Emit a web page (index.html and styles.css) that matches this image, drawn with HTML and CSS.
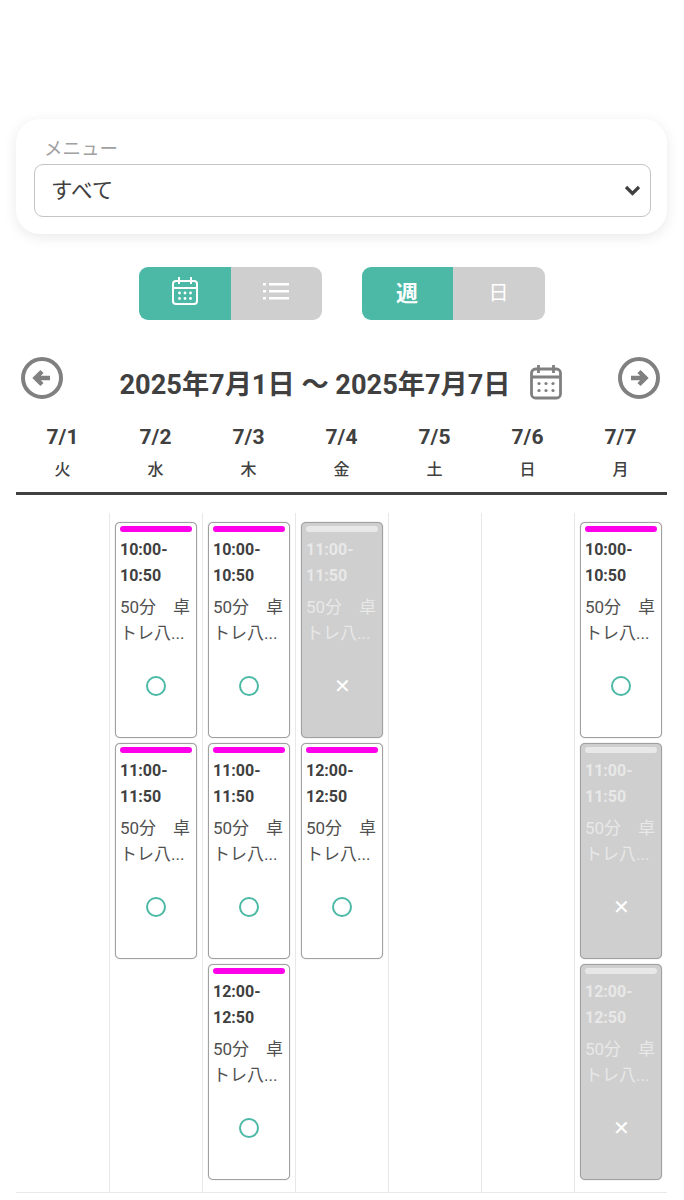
FILE: index.html
```html
<!DOCTYPE html>
<html lang="ja">
<head>
    <meta charset="utf-8" />
    <title>予約カレンダー</title>
    <meta name="viewport" content="width=device-width, initial-scale=1.0">
    <link rel="stylesheet" href="styles.css">
</head>
<body>

<div class="filter-card">
    <div class="filter-label">メニュー</div>
    <div class="select-box">
        <span>すべて</span>
        <svg class="select-arrow" width="17" height="11" viewBox="0 0 17 11"><path d="M2 2l6.500 6.500L15 2" fill="none" stroke="#404040" stroke-width="3.200"/></svg>
    </div>
</div>

<div class="toggle-row">
    <div class="toggle">
        <div class="toggle-item active">
            <svg width="26" height="28" viewBox="0 0 26 28" fill="none" stroke="#fff" stroke-width="2"><rect x="1" y="4" width="24" height="23" rx="3"/><path d="M1 11h24M7 0v7M19 0v7"/><g fill="#fff" stroke="none"><circle cx="7.500" cy="16" r="1.400"/><circle cx="13" cy="16" r="1.400"/><circle cx="18.500" cy="16" r="1.400"/><circle cx="7.500" cy="21.500" r="1.400"/><circle cx="13" cy="21.500" r="1.400"/><circle cx="18.500" cy="21.500" r="1.400"/></g></svg>
        </div>
        <div class="toggle-item">
            <svg width="26" height="18" viewBox="0 0 26 18" fill="#fff"><rect x="0" y="1" width="3" height="2.500"/><rect x="6" y="1" width="20" height="2.500"/><rect x="0" y="8" width="3" height="2.500"/><rect x="6" y="8" width="20" height="2.500"/><rect x="0" y="15" width="3" height="2.500"/><rect x="6" y="15" width="20" height="2.500"/></svg>
        </div>
    </div>
    <div class="toggle">
        <div class="toggle-item active strong">週</div>
        <div class="toggle-item">日</div>
    </div>
</div>

<div class="date-nav">
    <svg class="nav-arrow" width="42" height="42" viewBox="0 0 42 42" fill="none" stroke="#808080"><circle cx="21" cy="21" r="19" stroke-width="4"/><path d="M29 21H14M21 14.500L14.500 21l6.500 6.500" stroke-width="4.500"/></svg>
    <div class="date-title">
        <span>2025年7月1日 〜 2025年7月7日</span>
        <svg width="32" height="36" viewBox="0 0 32 36" fill="none" stroke="#808080" stroke-width="2.800"><rect x="1.500" y="5" width="29" height="29" rx="4"/><path d="M1.500 13h29M8.500 1v8M23.500 1v8"/><g fill="#808080" stroke="none"><circle cx="9" cy="19.500" r="1.600"/><circle cx="16" cy="19.500" r="1.600"/><circle cx="23" cy="19.500" r="1.600"/><circle cx="9" cy="26.500" r="1.600"/><circle cx="16" cy="26.500" r="1.600"/><circle cx="23" cy="26.500" r="1.600"/></g></svg>
    </div>
    <svg class="nav-arrow" width="42" height="42" viewBox="0 0 42 42" fill="none" stroke="#808080"><circle cx="21" cy="21" r="19" stroke-width="4"/><path d="M13 21h15M21 14.500l6.500 6.500-6.500 6.500" stroke-width="4.500"/></svg>
</div>

<div class="week-head">
    <div class="day-head"><b>7/1</b><span>火</span></div>
    <div class="day-head"><b>7/2</b><span>水</span></div>
    <div class="day-head"><b>7/3</b><span>木</span></div>
    <div class="day-head"><b>7/4</b><span>金</span></div>
    <div class="day-head"><b>7/5</b><span>土</span></div>
    <div class="day-head"><b>7/6</b><span>日</span></div>
    <div class="day-head"><b>7/7</b><span>月</span></div>
</div>

<div class="week-body">
    <div class="day-col"></div>

    <div class="day-col">
        <div class="slot">
            <div class="slot-bar"></div>
            <div class="slot-time">10:00-<br>10:50</div>
            <div class="slot-name">50分　卓トレ八...</div>
            <div class="slot-mark"><i class="circle"></i></div>
        </div>
        <div class="slot">
            <div class="slot-bar"></div>
            <div class="slot-time">11:00-<br>11:50</div>
            <div class="slot-name">50分　卓トレ八...</div>
            <div class="slot-mark"><i class="circle"></i></div>
        </div>
    </div>

    <div class="day-col">
        <div class="slot">
            <div class="slot-bar"></div>
            <div class="slot-time">10:00-<br>10:50</div>
            <div class="slot-name">50分　卓トレ八...</div>
            <div class="slot-mark"><i class="circle"></i></div>
        </div>
        <div class="slot">
            <div class="slot-bar"></div>
            <div class="slot-time">11:00-<br>11:50</div>
            <div class="slot-name">50分　卓トレ八...</div>
            <div class="slot-mark"><i class="circle"></i></div>
        </div>
        <div class="slot">
            <div class="slot-bar"></div>
            <div class="slot-time">12:00-<br>12:50</div>
            <div class="slot-name">50分　卓トレ八...</div>
            <div class="slot-mark"><i class="circle"></i></div>
        </div>
    </div>

    <div class="day-col">
        <div class="slot closed">
            <div class="slot-bar"></div>
            <div class="slot-time">11:00-<br>11:50</div>
            <div class="slot-name">50分　卓トレ八...</div>
            <div class="slot-mark">✕</div>
        </div>
        <div class="slot">
            <div class="slot-bar"></div>
            <div class="slot-time">12:00-<br>12:50</div>
            <div class="slot-name">50分　卓トレ八...</div>
            <div class="slot-mark"><i class="circle"></i></div>
        </div>
    </div>

    <div class="day-col"></div>
    <div class="day-col"></div>

    <div class="day-col">
        <div class="slot">
            <div class="slot-bar"></div>
            <div class="slot-time">10:00-<br>10:50</div>
            <div class="slot-name">50分　卓トレ八...</div>
            <div class="slot-mark"><i class="circle"></i></div>
        </div>
        <div class="slot closed">
            <div class="slot-bar"></div>
            <div class="slot-time">11:00-<br>11:50</div>
            <div class="slot-name">50分　卓トレ八...</div>
            <div class="slot-mark">✕</div>
        </div>
        <div class="slot closed">
            <div class="slot-bar"></div>
            <div class="slot-time">12:00-<br>12:50</div>
            <div class="slot-name">50分　卓トレ八...</div>
            <div class="slot-mark">✕</div>
        </div>
    </div>
</div>

</body>
</html>
```
FILE: styles.css
```css
* {
    margin: 0;
    padding: 0;
    box-sizing: border-box;
}

body {
    font-family: Roboto, "Noto Sans CJK JP", sans-serif;
    background-color: #fff;
    color: #404040;
    padding: 119px 17px 0 16px;
    height: 1200px;
    overflow: hidden;
}

.filter-card {
    height: 115px;
    border-radius: 24px;
    padding: 19px 16px 0 18px;
    background: #fff;
    box-shadow: 0 3px 14px rgba(0, 0, 0, 0.09);
}

.filter-label {
    font-size: 18.5px;
    line-height: 22px;
    color: #a0a0a0;
    padding-left: 10px;
    margin-bottom: 4px;
}

.select-box {
    height: 53px;
    border: 1px solid #c4c4c4;
    border-radius: 9px;
    padding: 0 9px 5px 16px;
    display: flex;
    justify-content: space-between;
    align-items: center;
    font-size: 21.5px;
}

.select-arrow {
    margin-top: 5px;
}

.toggle-row {
    display: flex;
    justify-content: center;
    gap: 40px;
    margin-top: 33px;
}

.toggle {
    display: flex;
    width: 183px;
    height: 53px;
    border-radius: 9px;
    overflow: hidden;
}

.toggle-item {
    flex: 1;
    display: flex;
    justify-content: center;
    align-items: center;
    background-color: #cfcfcf;
    color: #fff;
    font-size: 20px;
    padding-bottom: 5px;
}

.toggle-item.active {
    flex: 0 0 92px;
    background-color: #4cb9a6;
}

.toggle-item.strong {
    flex-basis: 91px;
    font-weight: 700;
    font-size: 22px;
}

.date-nav {
    display: flex;
    justify-content: space-between;
    align-items: flex-start;
    height: 44px;
    margin-top: 37px;
    padding: 0 7px 0 5px;
}

.date-title {
    display: flex;
    align-items: center;
    gap: 19px;
    margin-top: 5px;
    font-size: 27.2px;
    font-weight: 700;
}

.week-head {
    display: grid;
    grid-template-columns: repeat(7, 1fr);
    border-bottom: 3px solid #404040;
    height: 74px;
    margin-top: 20px;
}

.day-head {
    text-align: center;
    font-size: 16px;
}

.day-head b {
    display: block;
    font-size: 21px;
    line-height: 32px;
    font-weight: 700;
}

.day-head span {
    display: block;
    line-height: 33px;
    font-weight: 500;
}

.week-body {
    display: grid;
    grid-template-columns: repeat(7, 1fr);
    height: 680px;
    margin-top: 18px;
    border-bottom: 1px solid #e8e8e8;
}

.day-col {
    padding: 9px 5px 0 5px;
    border-left: 1px solid #e8e8e8;
    display: flex;
    flex-direction: column;
    gap: 5px;
}

.day-col:first-child {
    border-left: 0;
}

.slot {
    height: 216px;
    border: 1px solid #a0a0a0;
    border-radius: 5px;
    padding: 3px 4px 0 4px;
    background: #fff;
    box-shadow: 0 0 1px rgba(0, 0, 0, 0.4);
}

.slot-bar {
    height: 6px;
    border-radius: 3px;
    background-color: #ff00ea;
    margin-bottom: 5px;
}

.slot-time {
    font-size: 16px;
    line-height: 26px;
    font-weight: 700;
    margin-bottom: 5px;
}

.slot-name {
    font-size: 17px;
    line-height: 26px;
    height: 52px;
    overflow: hidden;
    color: #505050;
}

.slot-mark {
    display: flex;
    justify-content: center;
    align-items: center;
    height: 20px;
    margin-top: 30px;
    font-size: 20px;
}

.circle {
    display: block;
    width: 20px;
    height: 20px;
    border: 2px solid #4cb9a6;
    border-radius: 50%;
}

.slot.closed {
    background-color: #cfcfcf;
    color: #e8e8e8;
}

.slot.closed .slot-name {
    color: #e8e8e8;
}

.slot.closed .slot-bar {
    background-color: #e8e8e8;
}

.slot.closed .slot-mark {
    color: #fff;
}
```
